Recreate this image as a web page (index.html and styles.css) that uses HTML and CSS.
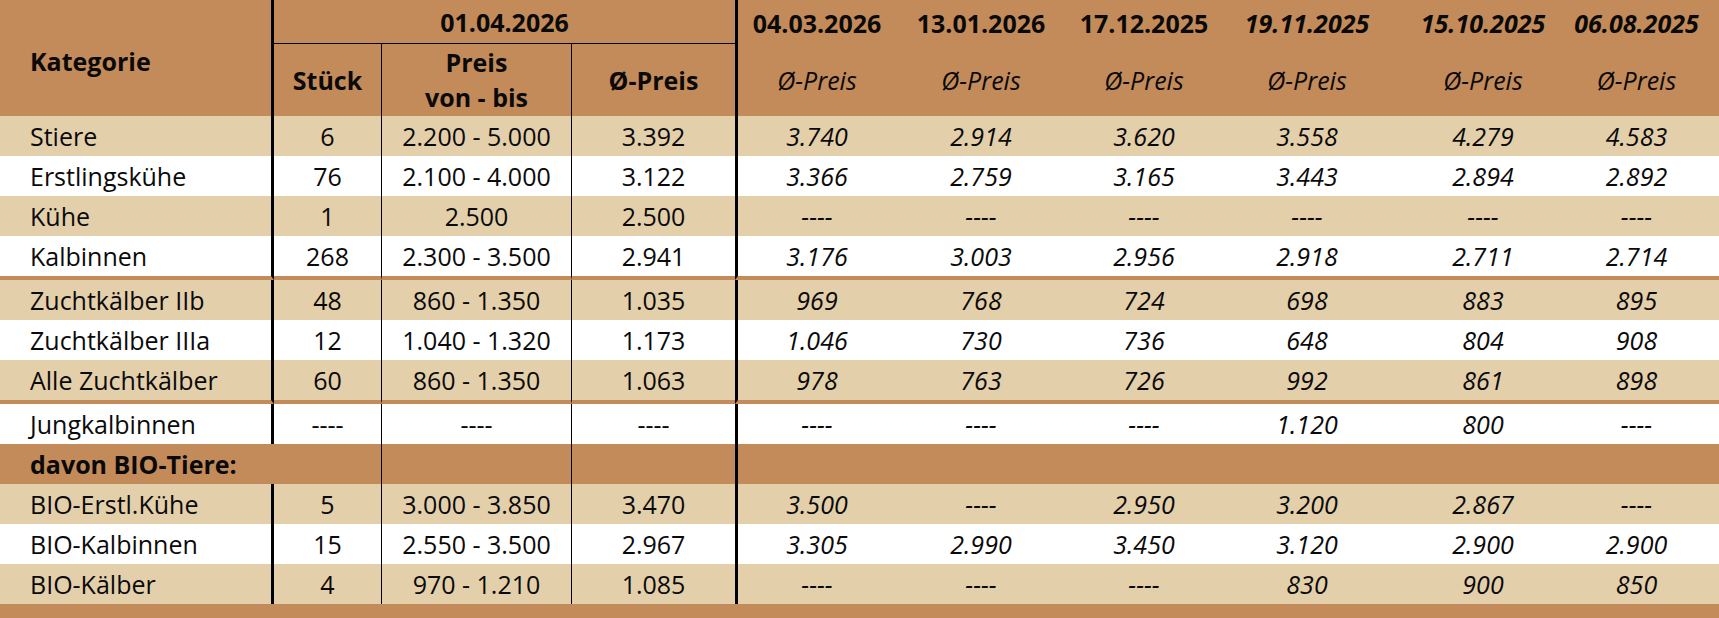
FILE: index.html
```html
<!DOCTYPE html>
<html lang="de">
<head>
<meta charset="utf-8">
<title>Marktbericht</title>
<link rel="stylesheet" href="styles.css">
</head>
<body>
<table class="market">
  <colgroup>
    <col class="w-kat"><col class="w-st"><col class="w-pr"><col class="w-avg">
    <col class="w-d1"><col class="w-d2"><col class="w-d3"><col class="w-d4"><col class="w-d5"><col class="w-d6">
  </colgroup>
  <thead>
    <tr class="h1">
      <th rowspan="2" class="kat">Kategorie</th>
      <th colspan="3" class="cur">01.04.2026</th>
      <th class="first">04.03.2026</th>
      <th>13.01.2026</th>
      <th>17.12.2025</th>
      <th class="it">19.11.2025</th>
      <th class="it">15.10.2025</th>
      <th class="it last">06.08.2025</th>
    </tr>
    <tr class="h2">
      <th class="st">Stück</th>
      <th class="ln">Preis<br>von - bis</th>
      <th class="ln">Ø-Preis</th>
      <th class="sub first">Ø-Preis</th>
      <th class="sub">Ø-Preis</th>
      <th class="sub">Ø-Preis</th>
      <th class="sub">Ø-Preis</th>
      <th class="sub">Ø-Preis</th>
      <th class="sub last">Ø-Preis</th>
    </tr>
  </thead>
  <tbody>
    <tr class="alt">
      <td class="kat">Stiere</td><td>6</td><td class="ln">2.200 - 5.000</td><td class="ln">3.392</td>
      <td class="hist first">3.740</td><td class="hist">2.914</td><td class="hist">3.620</td><td class="hist">3.558</td><td class="hist">4.279</td><td class="hist last">4.583</td>
    </tr>
    <tr>
      <td class="kat">Erstlingskühe</td><td>76</td><td class="ln">2.100 - 4.000</td><td class="ln">3.122</td>
      <td class="hist first">3.366</td><td class="hist">2.759</td><td class="hist">3.165</td><td class="hist">3.443</td><td class="hist">2.894</td><td class="hist last">2.892</td>
    </tr>
    <tr class="alt">
      <td class="kat">Kühe</td><td>1</td><td class="ln">2.500</td><td class="ln">2.500</td>
      <td class="hist first">----</td><td class="hist">----</td><td class="hist">----</td><td class="hist">----</td><td class="hist">----</td><td class="hist last">----</td>
    </tr>
    <tr class="sep">
      <td class="kat">Kalbinnen</td><td>268</td><td class="ln">2.300 - 3.500</td><td class="ln">2.941</td>
      <td class="hist first">3.176</td><td class="hist">3.003</td><td class="hist">2.956</td><td class="hist">2.918</td><td class="hist">2.711</td><td class="hist last">2.714</td>
    </tr>
    <tr class="alt">
      <td class="kat">Zuchtkälber IIb</td><td>48</td><td class="ln">860 - 1.350</td><td class="ln">1.035</td>
      <td class="hist first">969</td><td class="hist">768</td><td class="hist">724</td><td class="hist">698</td><td class="hist">883</td><td class="hist last">895</td>
    </tr>
    <tr>
      <td class="kat">Zuchtkälber IIIa</td><td>12</td><td class="ln">1.040 - 1.320</td><td class="ln">1.173</td>
      <td class="hist first">1.046</td><td class="hist">730</td><td class="hist">736</td><td class="hist">648</td><td class="hist">804</td><td class="hist last">908</td>
    </tr>
    <tr class="alt sep">
      <td class="kat">Alle Zuchtkälber</td><td>60</td><td class="ln">860 - 1.350</td><td class="ln">1.063</td>
      <td class="hist first">978</td><td class="hist">763</td><td class="hist">726</td><td class="hist">992</td><td class="hist">861</td><td class="hist last">898</td>
    </tr>
    <tr>
      <td class="kat">Jungkalbinnen</td><td>----</td><td class="ln">----</td><td class="ln">----</td>
      <td class="hist first">----</td><td class="hist">----</td><td class="hist">----</td><td class="hist">1.120</td><td class="hist">800</td><td class="hist last">----</td>
    </tr>
    <tr class="bio">
      <td colspan="2" class="kat bold">davon BIO-Tiere:</td><td class="ln"></td><td class="ln"></td>
      <td colspan="6" class="first"></td>
    </tr>
    <tr class="alt">
      <td class="kat">BIO-Erstl.Kühe</td><td>5</td><td class="ln">3.000 - 3.850</td><td class="ln">3.470</td>
      <td class="hist first">3.500</td><td class="hist">----</td><td class="hist">2.950</td><td class="hist">3.200</td><td class="hist">2.867</td><td class="hist last">----</td>
    </tr>
    <tr>
      <td class="kat">BIO-Kalbinnen</td><td>15</td><td class="ln">2.550 - 3.500</td><td class="ln">2.967</td>
      <td class="hist first">3.305</td><td class="hist">2.990</td><td class="hist">3.450</td><td class="hist">3.120</td><td class="hist">2.900</td><td class="hist last">2.900</td>
    </tr>
    <tr class="alt">
      <td class="kat">BIO-Kälber</td><td>4</td><td class="ln">970 - 1.210</td><td class="ln">1.085</td>
      <td class="hist first">----</td><td class="hist">----</td><td class="hist">----</td><td class="hist">830</td><td class="hist">900</td><td class="hist last">850</td>
    </tr>
  </tbody>
  <tfoot>
    <tr class="foot"><td colspan="10"></td></tr>
  </tfoot>
</table>
</body>
</html>
```

FILE: styles.css
```css
html, body {
  margin: 0;
  padding: 0;
  background: #ffffff;
}

.market {
  width: 1719px;
  table-layout: fixed;
  border-collapse: separate;
  border-spacing: 0;
  font-family: "Open Sans", "Noto Sans", sans-serif;
  font-size: 25px;
  color: #0a0a0a;
}

.w-kat { width: 274px; }
.w-st { width: 107px; }
.w-pr { width: 190px; }
.w-avg { width: 164px; }
.w-d1 { width: 161px; }
.w-d2 { width: 170px; }
.w-d3 { width: 156px; }
.w-d4 { width: 170px; }
.w-d5 { width: 182px; }
.w-d6 { width: 145px; }

.market th,
.market td {
  padding: 0;
  text-align: center;
  vertical-align: middle;
  line-height: 1.4;
  white-space: nowrap;
}

.market .last { padding-right: 20px; }

.market thead th {
  background: #c48b5a;
  font-weight: 700;
}

.market .h1 { height: 44px; }
.market .h2 { height: 72px; }

.market .h1 th { padding-top: 2px; }

.market .kat {
  text-align: left;
  padding-left: 30px;
  border-right: 3px solid #000;
}

.market thead .kat { padding-top: 6px; }

.market .cur {
  border-bottom: 1px solid #000;
}

.market .first {
  border-left: 3px solid #000;
}

.market .ln {
  border-left: 1px solid #000;
}

.market .it { font-style: italic; }

.market .sub {
  font-style: italic;
  font-weight: 400;
}

.market tbody tr { height: 40px; background: #ffffff; }
.market tbody tr.alt { background: #e4cfab; }

.market .hist { font-style: italic; }

.market tbody tr.sep { height: 44px; }
.market tr.sep td { border-bottom: 4px solid #c48b5a; }

.market tr.bio { background: #c48b5a; }
.market tr.bio .kat { border-right: 0; }
.market .bold { font-weight: 700; }

.market tr.foot { height: 14px; }
.market tr.foot td { background: #c48b5a; line-height: 0; font-size: 0; }
```
